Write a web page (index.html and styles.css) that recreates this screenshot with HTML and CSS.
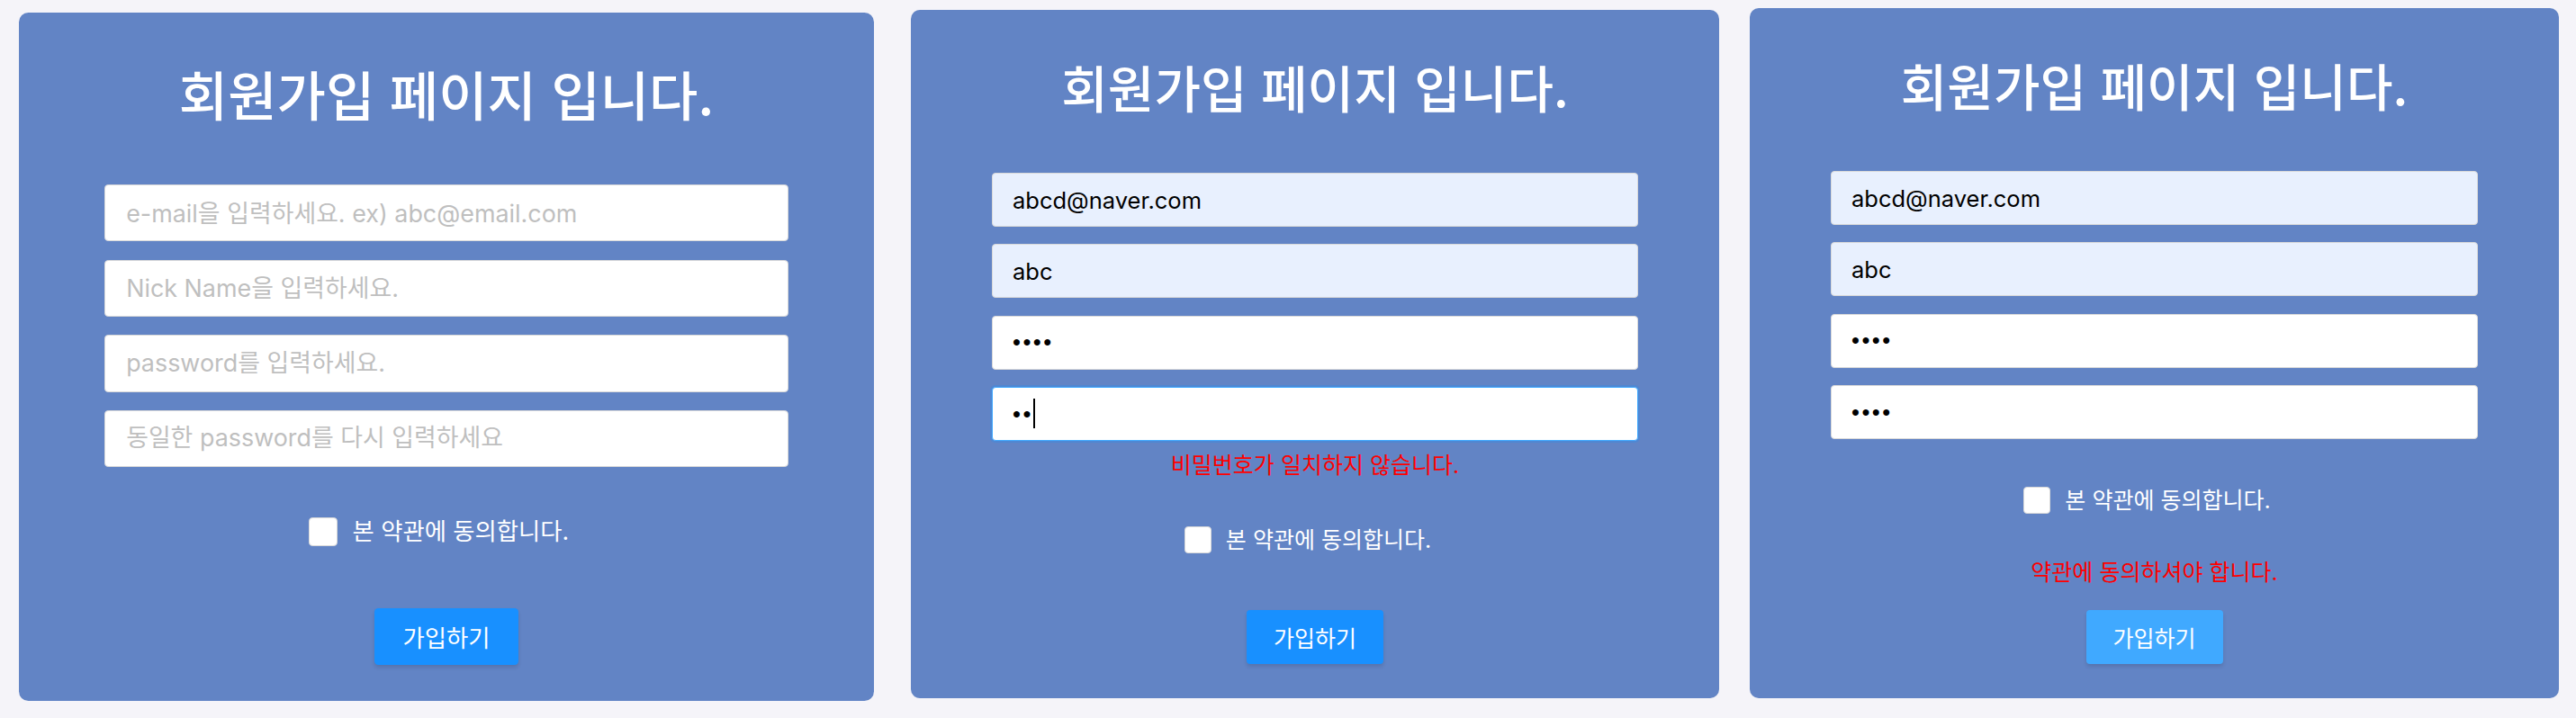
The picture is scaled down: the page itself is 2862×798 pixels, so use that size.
FILE: index.html
```html
<!DOCTYPE html>
<html lang="ko">
<head>
<meta charset="utf-8">
<title>회원가입</title>
<link rel="stylesheet" href="styles.css">
</head>
<body>
<main class="page">
  <section class="panel panel--one">
    <h1 class="title">회원가입 페이지 입니다.</h1>
    <div class="fields">
      <input class="field" type="text" placeholder="e-mail을 입력하세요. ex) abc@email.com">
      <input class="field" type="text" placeholder="Nick Name을 입력하세요.">
      <input class="field field--secret" type="password" placeholder="password를 입력하세요.">
      <input class="field field--secret" type="password" placeholder="동일한 password를 다시 입력하세요">
    </div>
    <label class="agree"><input class="check" type="checkbox"><span>본 약관에 동의합니다.</span></label>
    <button class="submit" type="button">가입하기</button>
  </section>

  <section class="panel panel--two">
    <h1 class="title">회원가입 페이지 입니다.</h1>
    <div class="fields">
      <input class="field field--filled" type="text" value="abcd@naver.com">
      <input class="field field--filled" type="text" value="abc">
      <input class="field field--secret" type="password" value="abcd">
      <div class="field-wrap">
        <input class="field field--secret field--focus" type="password" value="ab">
        <span class="caret"></span>
      </div>
    </div>
    <p class="error error--pw">비밀번호가 일치하지 않습니다.</p>
    <label class="agree"><input class="check" type="checkbox"><span>본 약관에 동의합니다.</span></label>
    <button class="submit" type="button">가입하기</button>
  </section>

  <section class="panel panel--three">
    <h1 class="title">회원가입 페이지 입니다.</h1>
    <div class="fields">
      <input class="field field--filled" type="text" value="abcd@naver.com">
      <input class="field field--filled" type="text" value="abc">
      <input class="field field--secret" type="password" value="abcd">
      <input class="field field--secret" type="password" value="abcd">
    </div>
    <label class="agree"><input class="check" type="checkbox"><span>본 약관에 동의합니다.</span></label>
    <p class="error error--terms">약관에 동의하셔야 합니다.</p>
    <button class="submit submit--hover" type="button">가입하기</button>
  </section>
</main>
</body>
</html>
```

FILE: styles.css
```css
* {
  box-sizing: border-box;
}

html,
body {
  margin: 0;
  padding: 0;
}

body {
  background: #f5f4f9;
  font-family: Inter, "Noto Sans CJK KR", sans-serif;
}

.page {
  display: flex;
  align-items: flex-start;
  width: 2862px;
  height: 798px;
  padding-left: 21px;
  overflow: hidden;
}

.panel {
  --s: 1;
  display: flex;
  flex-direction: column;
  height: 765px;
  padding: calc(48px * var(--s)) calc(90px * var(--s)) calc(38px * var(--s));
  background: #6284c5;
  border-radius: calc(10px * var(--s));
  color: #fff;
}

.panel--one {
  --s: 1.055;
  width: 950px;
  margin-top: 14px;
}

.panel--two {
  width: 898px;
  margin-top: 11px;
  margin-left: 41px;
}

.panel--three {
  width: 899px;
  height: 767px;
  margin-top: 9px;
  margin-left: 34px;
}

.title {
  margin: 0 0 calc(60px * var(--s));
  font-family: "Noto Sans CJK KR", sans-serif;
  font-size: calc(56px * var(--s));
  font-weight: 500;
  line-height: calc(73px * var(--s));
  text-align: center;
}

.fields {
  display: flex;
  flex-direction: column;
  gap: calc(19.4px * var(--s));
}

.field-wrap {
  position: relative;
}

.field {
  display: block;
  width: 100%;
  height: calc(60px * var(--s));
  margin: 0;
  padding: 0 calc(22px * var(--s));
  font-family: Inter, "Noto Sans CJK KR", sans-serif;
  font-size: calc(25.5px * var(--s));
  color: #000;
  background: #fff;
  border: 1px solid #d9d9d9;
  border-radius: calc(4px * var(--s));
  outline: none;
}

.field--secret {
  font-family: "Liberation Sans", "Noto Sans CJK KR", sans-serif;
  letter-spacing: calc(2.5px * var(--s));
}

.field--secret::placeholder {
  font-family: Inter, "Noto Sans CJK KR", sans-serif;
  letter-spacing: 0;
}

.field::placeholder {
  color: #bfbfbf;
}

.field--filled {
  background: #e8f0fe;
}

.field--focus {
  border-color: #40a9ff;
  box-shadow: 0 0 0 2px rgba(24, 144, 255, 0.25);
}

.caret {
  position: absolute;
  left: calc(46px * var(--s));
  top: calc(13px * var(--s));
  width: 1.5px;
  height: calc(33px * var(--s));
  background: #000;
}

.agree {
  display: flex;
  align-items: center;
  align-self: center;
  gap: calc(16px * var(--s));
  margin-top: calc(53px * var(--s));
  padding-right: calc(16px * var(--s));
  font-size: calc(25px * var(--s));
  line-height: calc(30px * var(--s));
}

.check {
  appearance: none;
  -webkit-appearance: none;
  width: calc(30px * var(--s));
  height: calc(30px * var(--s));
  margin: 0;
  background: #fff;
  border: 1px solid #d9d9d9;
  border-radius: calc(4px * var(--s));
}

.error {
  margin: 0;
  color: #ff0000;
  font-size: calc(25px * var(--s));
  line-height: calc(30px * var(--s));
  text-align: center;
}

.error--pw {
  margin-top: calc(12px * var(--s));
}

.error--terms {
  margin-top: calc(50px * var(--s));
}

.submit {
  align-self: center;
  width: calc(152px * var(--s));
  height: calc(60px * var(--s));
  margin-top: auto;
  padding: 0;
  font-family: Inter, "Noto Sans CJK KR", sans-serif;
  font-size: calc(25px * var(--s));
  color: #fff;
  background: #1890ff;
  border: none;
  border-radius: calc(4px * var(--s));
  box-shadow: 0 3px 4px rgba(0, 0, 0, 0.12);
}

.submit--hover {
  background: #40a9ff;
}
```
